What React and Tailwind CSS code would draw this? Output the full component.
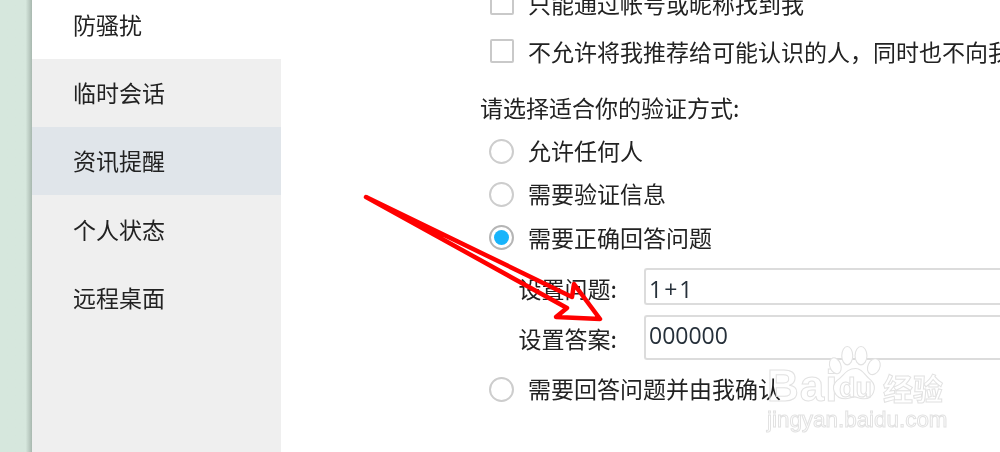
const sideItems = ["临时会话", "资讯提醒", "个人状态", "远程桌面"];

function Check({ label }) {
  return (
    <div className="flex h-[48px] items-center pl-[10px]">
      <span className="h-[24px] w-[24px] shrink-0 rounded-[2px] border-2 border-[#c9c9c9] bg-white" />
      <span className="ml-[14px] whitespace-nowrap">{label}</span>
    </div>
  );
}

function Radio({ label, on }) {
  return (
    <div className="flex h-[43px] items-center pl-[9px]">
      <span
        className={`flex h-[25px] w-[25px] shrink-0 items-center justify-center rounded-full border-2 bg-white ${
          on ? "border-[#b5b5b5]" : "border-[#cdcdcd]"
        }`}
      >
        {on && <span className="h-[15px] w-[15px] rounded-full bg-[#18b4fb]" />}
      </span>
      <span className={`ml-[14px] whitespace-nowrap ${on ? "pb-[1px]" : "pb-[2px]"}`}>{label}</span>
    </div>
  );
}

function Field({ label, value, box }) {
  return (
    <div className="mt-[9px] flex items-center">
      <span className="w-[137px] shrink-0 pt-[3px] text-right whitespace-nowrap">{label}</span>
      <div
        className={`ml-[27px] flex flex-1 items-center rounded-l-[3px] border-y-2 border-l-2 border-[#dcdcdc] pl-[3px] font-['Open_Sans',sans-serif] text-[#26303a] ${box}`}
      >
        {value}
      </div>
    </div>
  );
}

function Watermark() {
  const outline = "text-transparent [-webkit-text-stroke:1px_#e2e2e2]";
  return (
    <div className="absolute top-[344px] left-[766px] h-[90px] w-[190px] font-['Liberation_Sans',sans-serif]">
      <span className={`absolute top-[20px] left-[1px] text-[44px] leading-[44px] font-bold tracking-[1px] ${outline}`}>Bai</span>
      <svg className="absolute top-0 left-[62px]" width="55" height="60" viewBox="0 0 60 62" fill="#fff" stroke="#e2e2e2" strokeWidth="1.2">
        <ellipse cx="8" cy="22" rx="6" ry="9" transform="rotate(-20 8 22)" />
        <ellipse cx="21" cy="11" rx="6" ry="10" />
        <ellipse cx="36" cy="11" rx="6.5" ry="10" />
        <ellipse cx="50" cy="23" rx="6.5" ry="9" transform="rotate(25 50 23)" />
        <path d="M30 25c8 0 10 8 17 13 7 7 3 21-9 20-4 0-6-2-9-2s-6 2-10 2C7 58 2 45 10 38c7-5 10-13 20-13z" />
      </svg>
      <span className={`absolute top-[29px] left-[73px] text-[27px] leading-[30px] font-bold ${outline}`}>du</span>
      <span className={`absolute top-[25px] left-[117px] font-['Noto_Sans_CJK_SC',sans-serif] text-[30px] leading-[36px] font-bold ${outline}`}>经验</span>
      <span className={`absolute top-[62px] left-[1px] text-[22.4px] leading-[28px] whitespace-nowrap ${outline}`}>jingyan.baidu.com</span>
    </div>
  );
}

export default function App() {
  return (
    <div className="relative flex h-[452px] w-[1000px] overflow-hidden bg-white font-['Noto_Sans_CJK_SC',sans-serif] text-[23px] text-[#222222] blur-[0.5px]">
      <div className="w-[32px] shrink-0 bg-gradient-to-r from-[#d6e7dd] from-80% to-[#a8b8af]" />

      <aside className="flex w-[249px] shrink-0 flex-col bg-[#efefef]">
        <div className="flex h-[59px] items-center bg-white pb-[10px] pl-[41px]">防骚扰</div>
        {sideItems.map((item, i) => (
          <div
            key={item}
            className={`flex h-[68px] items-center pl-[41px] ${i < 2 ? "pb-[2px]" : ""} ${
              item === "资讯提醒" ? "bg-[#e0e5ea]" : ""
            }`}
          >
            {item}
          </div>
        ))}
      </aside>

      <main className="mt-[-21px] flex min-w-0 flex-1 flex-col pl-[199px]">
        <Check label="只能通过帐号或昵称找到我" />
        <Check label="不允许将我推荐给可能认识的人，同时也不向我推荐" />
        <div className="flex h-[55px] items-end pb-[3px] leading-[40px] whitespace-nowrap">请选择适合你的验证方式:</div>
        <Radio label="允许任何人" />
        <Radio label="需要验证信息" />
        <Radio label="需要正确回答问题" on />
        <Field label="设置问题:" value={<span className="tracking-[2px]">1+1</span>} box="h-[37px] pt-[5px]" />
        <Field label="设置答案:" value="000000" box="h-[45px] pb-[4px]" />
        <div className="mt-[8px]">
          <Radio label="需要回答问题并由我确认" />
        </div>
      </main>

      <Watermark />

      <svg className="absolute top-0 left-0" width="1000" height="452" viewBox="0 0 1000 452" fill="none">
        <path
          d="M366 197 L572 297 L574 284 L600 319 L556 317 L567 308 Z"
          stroke="#ff0000"
          strokeWidth="4.5"
          strokeLinejoin="round"
        />
      </svg>
    </div>
  );
}
